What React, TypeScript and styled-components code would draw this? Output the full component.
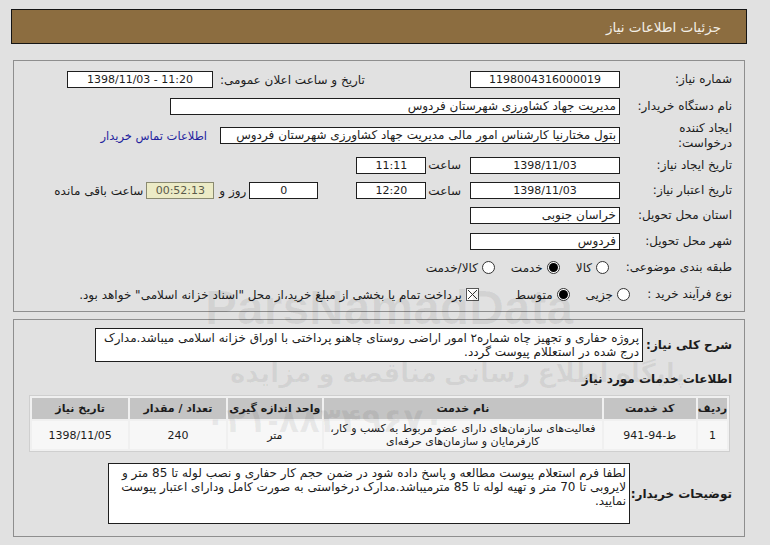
import React from "react";
import styled, { createGlobalStyle } from "styled-components";

const GlobalStyle = createGlobalStyle`
  body {
    margin: 0;
    background: #e1e1e1;
    font-family: "DejaVu Sans", Tahoma, sans-serif;
    font-size: 12px;
    color: #1c1c1c;
  }
`;

const Page = styled.div`
  width: 770px;
  direction: rtl;
  padding: 9px 0 9px;
  box-sizing: border-box;
  position: relative;
  overflow: hidden;
`;

const Header = styled.div`
  margin: 0 23px 0 11px;
  height: 35px;
  box-sizing: border-box;
  background: #8c6d40;
  border: 1px solid #151515;
  color: #f3efe6;
  font-size: 13.5px;
  display: flex;
  align-items: center;
  padding-right: 25px;
`;

const Panel = styled.div<{ $top: number; $pt: number; $pb: number }>`
  margin: ${(p) => p.$top}px 25px 0 13px;
  border: 1px solid #8e8e8e;
  padding: ${(p) => p.$pt}px 12px ${(p) => p.$pb}px 0;
`;

const Row = styled.div<{ $h: number }>`
  height: ${(p) => p.$h}px;
  display: flex;
  align-items: center;
`;

const Label = styled.div<{ $w?: number }>`
  width: ${(p) => p.$w ?? 112}px;
  flex-shrink: 0;
  line-height: 15px;
  white-space: nowrap;
`;

const Field = styled.div<{ $w: number; $num?: boolean; $ltr?: boolean; $bg?: string }>`
  width: ${(p) => p.$w}px;
  height: 17px;
  box-sizing: border-box;
  flex-shrink: 0;
  background: ${(p) => p.$bg ?? "#fff"};
  border: 1px solid ${(p) => (p.$bg ? "#8a8a70" : "#1e1e1e")};
  padding: 0 3px;
  font-size: ${(p) => (p.$num ? 11 : 12)}px;
  line-height: 15px;
  white-space: nowrap;
  overflow: hidden;
  text-align: ${(p) => (p.$num ? "center" : "right")};
  direction: ${(p) => (p.$ltr ? "ltr" : "rtl")};
  color: ${(p) => (p.$bg ? "#5a5a4a" : "#1c1c1c")};
`;

const Text = styled.span<{ $mr?: number; $ml?: number }>`
  margin-right: ${(p) => p.$mr ?? 0}px;
  margin-left: ${(p) => p.$ml ?? 0}px;
  white-space: nowrap;
`;

const Group = styled.div`
  display: flex;
  align-items: center;
  margin-right: auto;
  margin-left: 53px;
`;

const Link = styled.a`
  color: #1f1f9e;
  font-size: 11.5px;
  text-decoration: none;
  margin-right: 13px;
  white-space: nowrap;
`;

const Options = styled.div`
  display: flex;
  align-items: center;
`;

const Option = styled.label<{ $mr: number }>`
  display: flex;
  align-items: center;
  gap: 4px;
  margin-right: ${(p) => p.$mr}px;
  white-space: nowrap;
`;

const Radio = styled.span<{ $checked?: boolean }>`
  width: 13px;
  height: 13px;
  box-sizing: border-box;
  flex-shrink: 0;
  border-radius: 50%;
  border: 1px solid #333;
  background: #fff;
  display: inline-flex;
  align-items: center;
  justify-content: center;

  &::after {
    content: "";
    width: 9px;
    height: 9px;
    border-radius: 50%;
    background: ${(p) => (p.$checked ? "#000" : "transparent")};
  }
`;

const Check = styled.span`
  width: 13px;
  height: 13px;
  flex-shrink: 0;
  display: inline-flex;
`;

const BoldLabel = styled.div<{ $w: number }>`
  width: ${(p) => p.$w}px;
  flex-shrink: 0;
  font-weight: bold;
  font-size: 12px;
  white-space: nowrap;
`;

const TextBox = styled.div<{ $w: number; $h: number }>`
  width: ${(p) => p.$w}px;
  height: ${(p) => p.$h}px;
  box-sizing: border-box;
  background: #fff;
  border: 1px solid #1e1e1e;
  padding: 2px 3px;
  line-height: 14px;
  white-space: nowrap;
  overflow: hidden;
`;

const FlexRow = styled.div<{ $mt: number }>`
  display: flex;
  align-items: center;
  margin-top: ${(p) => p.$mt}px;
`;

const Heading = styled.div`
  font-weight: bold;
  font-size: 12px;
  margin-top: 9px;
  line-height: 16px;
`;

const Table = styled.table`
  margin: 8px 2px 0 0;
  border-collapse: separate;
  border-spacing: 2px;
  background: #f0f0f0;
  border: 1px solid #cfcfcf;
  width: 701px;
  font-size: 11px;
`;

const Th = styled.th<{ $w: number }>`
  width: ${(p) => p.$w}px;
  background: #c4c4c4;
  font-weight: bold;
  height: 21px;
  padding: 0;
  text-align: center;
`;

const Td = styled.td`
  background: #f7f7f7;
  height: 28px;
  padding: 0 2px;
  text-align: center;
  line-height: 13px;
  vertical-align: middle;
  white-space: nowrap;
`;

const Code = styled.span`
  direction: ltr;
  unicode-bidi: isolate;
`;

const Watermark = styled.div<{ $x: number; $y: number; $size: number }>`
  position: absolute;
  left: ${(p) => p.$x}px;
  top: ${(p) => p.$y}px;
  font-family: "Liberation Sans", "DejaVu Sans", sans-serif;
  font-weight: bold;
  font-size: ${(p) => p.$size}px;
  color: rgba(0, 0, 0, 0.06);
  pointer-events: none;
  white-space: nowrap;
`;

const CheckIcon = () => (
  <Check>
    <svg width="13" height="13" viewBox="0 0 13 13">
      <rect x="0.5" y="0.5" width="12" height="12" fill="#fff" stroke="#555" />
      <path d="M2 2 L11 11 M11 2 L2 11" stroke="#333" strokeWidth="1" />
    </svg>
  </Check>
);

export default function App() {
  return (
    <Page>
      <GlobalStyle />
      <Header>جزئیات اطلاعات نیاز</Header>

      <Panel $top={16} $pt={6} $pb={3}>
        <Row $h={25}>
          <Label>شماره نیاز:</Label>
          <Field $w={150} $num>1198004316000019</Field>
          <Group>
            <Text $ml={7}>تاریخ و ساعت اعلان عمومی:</Text>
            <Field $w={146} $num $ltr>1398/11/03 - 11:20</Field>
          </Group>
        </Row>
        <Row $h={28}>
          <Label>نام دستگاه خریدار:</Label>
          <Field $w={450}>مدیریت جهاد کشاورزی شهرستان فردوس</Field>
        </Row>
        <Row $h={31}>
          <Label>
            ایجاد کننده
            <br />
            درخواست:
          </Label>
          <Field $w={400}>
            بتول  مختارنیا کارشناس امور مالی مدیریت جهاد کشاورزی شهرستان فردوس
          </Field>
          <Link href="#">اطلاعات تماس خریدار</Link>
        </Row>
        <Row $h={28}>
          <Label>تاریخ ایجاد نیاز:</Label>
          <Field $w={150} $num>1398/11/03</Field>
          <Text $mr={9} $ml={2}>ساعت</Text>
          <Field $w={70} $num>11:11</Field>
        </Row>
        <Row $h={23}>
          <Label>تاریخ اعتبار نیاز:</Label>
          <Field $w={150} $num>1398/11/03</Field>
          <Text $mr={9} $ml={2}>ساعت</Text>
          <Field $w={70} $num>12:20</Field>
          <Field $w={69} $num style={{ marginRight: 38 }}>0</Field>
          <Text $mr={3} $ml={5}>روز و</Text>
          <Field $w={68} $num $bg="#ecebc6">00:52:13</Field>
          <Text $mr={3}>ساعت باقی مانده</Text>
        </Row>
        <Row $h={26}>
          <Label>استان محل تحویل:</Label>
          <Field $w={150}>خراسان جنوبی</Field>
        </Row>
        <Row $h={26}>
          <Label>شهر محل تحویل:</Label>
          <Field $w={150}>فردوس</Field>
        </Row>
        <Row $h={27}>
          <Label>طبقه بندی موضوعی:</Label>
          <Options>
            <Option $mr={11}>
              <Radio />
              کالا
            </Option>
            <Option $mr={16}>
              <Radio $checked />
              خدمت
            </Option>
            <Option $mr={16}>
              <Radio />
              کالا/خدمت
            </Option>
          </Options>
        </Row>
        <Row $h={27}>
          <Label $w={102}>نوع فرآیند خرید :</Label>
          <Options>
            <Option $mr={0}>
              <Radio />
              جزیی
            </Option>
            <Option $mr={16}>
              <Radio $checked />
              متوسط
            </Option>
            <Option $mr={36}>
              <CheckIcon />
              پرداخت تمام یا بخشی از مبلغ خرید،از محل "اسناد خزانه اسلامی" خواهد بود.
            </Option>
          </Options>
        </Row>
      </Panel>

      <Panel $top={7} $pt={8} $pb={12}>
        <FlexRow $mt={0}>
          <BoldLabel $w={89}>شرح کلی نیاز:</BoldLabel>
          <TextBox $w={548} $h={34}>
            پروژه حفاری و تجهیز چاه شماره۲ امور اراضی روستای چاهنو پرداختی با اوراق خزانه اسلامی میباشد.مدارک
            <br />
            درج شده در استعللام پیوست گردد.
          </TextBox>
        </FlexRow>
        <Heading>اطلاعات خدمات مورد نیاز</Heading>
        <Table>
          <thead>
            <tr>
              <Th $w={26}>ردیف</Th>
              <Th $w={93}>کد خدمت</Th>
              <Th $w={278}>نام خدمت</Th>
              <Th $w={96}>واحد اندازه گیری</Th>
              <Th $w={97}>تعداد / مقدار</Th>
              <Th $w={97}>تاریخ نیاز</Th>
            </tr>
          </thead>
          <tbody>
            <tr>
              <Td>1</Td>
              <Td>
                <Code>941-94-ط</Code>
              </Td>
              <Td>
                فعالیت‌های سازمان‌های دارای عضو مربوط به کسب و کار،
                <br />
                کارفرمایان و سازمان‌های حرفه‌ای
              </Td>
              <Td>متر</Td>
              <Td>240</Td>
              <Td>1398/11/05</Td>
            </tr>
          </tbody>
        </Table>
        <FlexRow $mt={11}>
          <BoldLabel $w={102}>توضیحات خریدار:</BoldLabel>
          <TextBox $w={522} $h={61}>
            لطفا فرم استعلام پیوست مطالعه و پاسخ داده شود در ضمن  حجم کار حفاری و نصب لوله تا 85 متر و
            <br />
            لایروبی تا 70 متر و تهیه لوله تا 85 مترمیباشد.مدارک درخواستی به صورت کامل ودارای اعتبار پیوست
            <br />
            نمایید.
          </TextBox>
        </FlexRow>
      </Panel>
      <Watermark $x={205} $y={280} $size={48} aria-hidden>ParsNamadData</Watermark>
      <Watermark $x={230} $y={358} $size={26} aria-hidden>پایگاه اطلاع رسانی مناقصه و مزایده</Watermark>
      <Watermark $x={205} $y={400} $size={34} aria-hidden>۰۲۱-۸۸۳۴۹۶۷۰</Watermark>
    </Page>
  );
}
